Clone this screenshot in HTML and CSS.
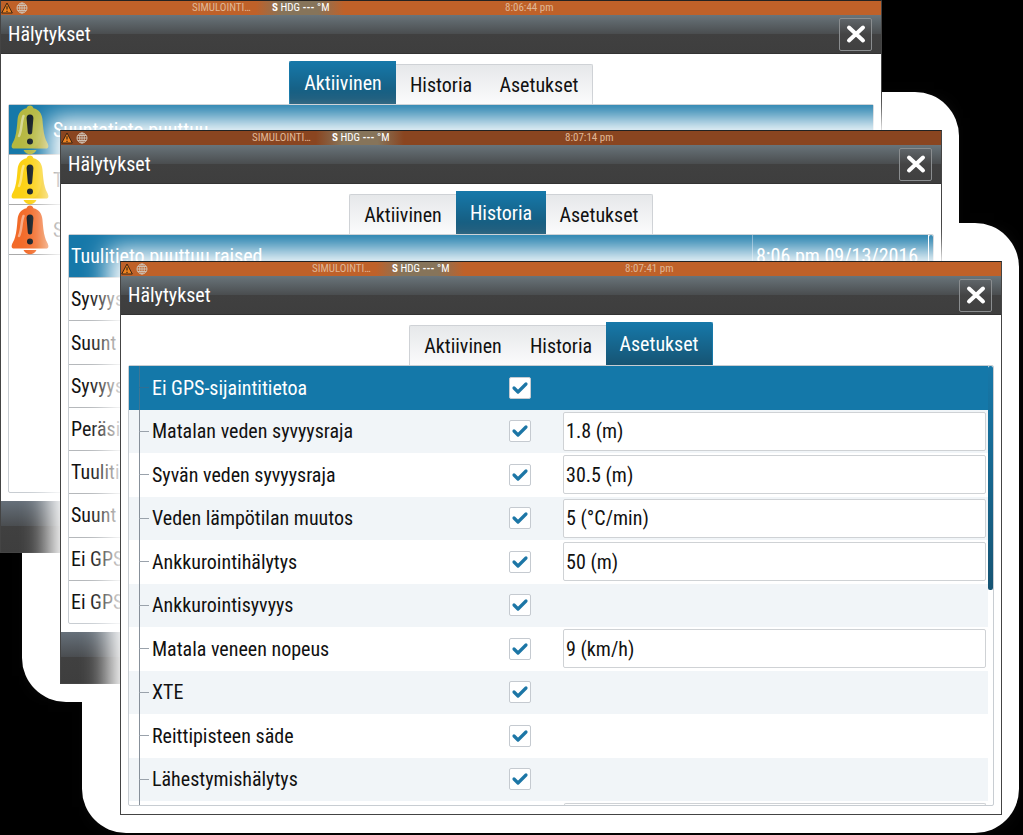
FILE: index.html
```html
<!DOCTYPE html>
<html lang="fi">
<head>
<meta charset="utf-8">
<meta name="viewport" content="width=device-width, initial-scale=1">
<title>Hälytykset</title>
<link rel="stylesheet" href="styles.css">
</head>
<body>
<svg class="symbols" aria-hidden="true">
  <defs>
    <symbol id="warn" viewBox="0 0 12 12">
      <path d="M6 1 11.3 11H.7z" fill="#ef8420" stroke="#3a2413" stroke-width="1" stroke-linejoin="round"/>
      <path d="M6 4.2v3.4M6 8.8v1.2" stroke="#3a2413" stroke-width="1.2"/>
    </symbol>
    <symbol id="globe" viewBox="0 0 12 12">
      <g fill="none" stroke="#cfc0b2" stroke-width="1"><circle cx="6" cy="6" r="5"/><ellipse cx="6" cy="6" rx="2.3" ry="5"/><path d="M6 1v10M1 6h10M1.8 3.5h8.4M1.8 8.5h8.4"/></g>
    </symbol>
    <symbol id="cross" viewBox="0 0 20 20">
      <path d="M3 3.500 17 16.500M17 3.500 3 16.500" fill="none" stroke="#fff" stroke-width="4" stroke-linecap="round"/>
    </symbol>
    <symbol id="bell" viewBox="0 0 38 50">
      <path d="M12.500 45h13c-1.500 3-4 4.300-6.500 4.300S14 48 12.500 45z" fill="currentColor"/>
      <path d="M19 .5c-1.800 0-3 1.200-3.500 2.800C10 4.500 7.200 8.500 6.600 14c-.6 7.500-1.100 13-2.500 18C3.200 36 .8 38 .6 41c0 2 .9 2.500 2.600 2.500h31.600c1.700 0 2.600-.5 2.600-2.500-.2-3-2.600-5-3.500-9-1.400-5-1.900-10.500-2.500-18-.6-5.500-3.400-9.500-8.900-10.700C22 1.700 20.800.5 19 .5z" fill="currentColor"/>
      <path d="M31.400 14c.6 7.500 1.100 13 2.500 18 .9 4 3.300 6 3.500 9 0 2-.9 2.500-2.600 2.500H20c9-1 11.500-14 11.400-29.500z" fill="#c87800" fill-opacity="0.12"/>
      <path d="M12.500 11c-2.500 6-1.500 14-4.500 20" fill="none" stroke="#fff" stroke-opacity="0.45" stroke-width="2.500" stroke-linecap="round"/>
      <path d="M19 9.500c2.200 0 3.500 1.500 3.400 3.800l-1.200 14c-.1 1.500-1 2.200-2.200 2.200s-2.100-.7-2.200-2.200l-1.200-14c-.1-2.300 1.200-3.800 3.400-3.800z" fill="#101a22"/>
      <circle cx="19" cy="36.500" r="3" fill="#101a22"/>
    </symbol>
  </defs>
</svg>

<main class="desktop">

  <section class="window window-active" aria-label="Hälytykset: Aktiivinen">
    <div class="status">
      <span class="status-icons"><svg><use href="#warn"/></svg><svg><use href="#globe"/></svg></span>
      <span class="status-mode">SIMULOINTI…</span>
      <span class="status-heading"><b>S</b> HDG <b>---</b> °M</span>
      <span class="status-time">8:06:44 pm</span>
    </div>
    <header class="titlebar"><h2>Hälytykset</h2><button class="close" aria-label="Sulje"><svg><use href="#cross"/></svg></button></header>
    <nav class="tabs">
      <button class="tab tab-current">Aktiivinen</button><button class="tab">Historia</button><button class="tab">Asetukset</button>
    </nav>
    <div class="panel">
      <ul class="alarms">
        <li class="alarm alarm-selected"><svg class="bell bell-green"><use href="#bell"/></svg><span>Suuntatieto puuttuu</span></li>
        <li class="alarm"><svg class="bell bell-yellow"><use href="#bell"/></svg><span>T</span></li>
        <li class="alarm"><svg class="bell bell-orange"><use href="#bell"/></svg><span>S</span></li>
      </ul>
    </div>
    <footer class="toolbar"></footer>
  </section>

  <section class="window window-history" aria-label="Hälytykset: Historia">
    <div class="status status-dark">
      <span class="status-icons"><svg><use href="#warn"/></svg><svg><use href="#globe"/></svg></span>
      <span class="status-mode">SIMULOINTI…</span>
      <span class="status-heading"><b>S</b> HDG <b>---</b> °M</span>
      <span class="status-time">8:07:14 pm</span>
    </div>
    <header class="titlebar"><h2>Hälytykset</h2><button class="close" aria-label="Sulje"><svg><use href="#cross"/></svg></button></header>
    <nav class="tabs">
      <button class="tab">Aktiivinen</button><button class="tab tab-current">Historia</button><button class="tab">Asetukset</button>
    </nav>
    <div class="panel">
      <ul class="events">
        <li class="event event-selected"><span>Tuulitieto puuttuu raised</span><time>8:06 pm 09/13/2016</time></li>
        <li class="event">Syvyys</li>
        <li class="event">Suunt</li>
        <li class="event">Syvyys</li>
        <li class="event">Peräsi</li>
        <li class="event">Tuuliti</li>
        <li class="event">Suunt</li>
        <li class="event">Ei GPS</li>
        <li class="event">Ei GPS</li>
      </ul>
      <div class="scroll"><div class="thumb"></div></div>
    </div>
    <footer class="toolbar"></footer>
  </section>

  <section class="window window-settings" aria-label="Hälytykset: Asetukset">
    <div class="status">
      <span class="status-icons"><svg><use href="#warn"/></svg><svg><use href="#globe"/></svg></span>
      <span class="status-mode">SIMULOINTI…</span>
      <span class="status-heading"><b>S</b> HDG <b>---</b> °M</span>
      <span class="status-time">8:07:41 pm</span>
    </div>
    <header class="titlebar"><h2>Hälytykset</h2><button class="close" aria-label="Sulje"><svg><use href="#cross"/></svg></button></header>
    <nav class="tabs">
      <button class="tab">Aktiivinen</button><button class="tab">Historia</button><button class="tab tab-current">Asetukset</button>
    </nav>
    <div class="panel">
      <div class="settings">
        <div class="setting setting-selected"><label for="s1">Ei GPS-sijaintitietoa</label><input id="s1" type="checkbox" checked></div>
        <div class="setting"><label for="s2">Matalan veden syvyysraja</label><input id="s2" type="checkbox" checked><input type="text" value="1.8 (m)" aria-label="Matalan veden syvyysraja"></div>
        <div class="setting"><label for="s3">Syvän veden syvyysraja</label><input id="s3" type="checkbox" checked><input type="text" value="30.5 (m)" aria-label="Syvän veden syvyysraja"></div>
        <div class="setting"><label for="s4">Veden lämpötilan muutos</label><input id="s4" type="checkbox" checked><input type="text" value="5 (°C/min)" aria-label="Veden lämpötilan muutos"></div>
        <div class="setting"><label for="s5">Ankkurointihälytys</label><input id="s5" type="checkbox" checked><input type="text" value="50 (m)" aria-label="Ankkurointihälytys"></div>
        <div class="setting"><label for="s6">Ankkurointisyvyys</label><input id="s6" type="checkbox" checked></div>
        <div class="setting"><label for="s7">Matala veneen nopeus</label><input id="s7" type="checkbox" checked><input type="text" value="9 (km/h)" aria-label="Matala veneen nopeus"></div>
        <div class="setting"><label for="s8">XTE</label><input id="s8" type="checkbox" checked></div>
        <div class="setting"><label for="s9">Reittipisteen säde</label><input id="s9" type="checkbox" checked></div>
        <div class="setting"><label for="s10">Lähestymishälytys</label><input id="s10" type="checkbox" checked></div>
        <div class="setting-next"><span></span></div>
      </div>
      <div class="scroll"><div class="thumb"></div></div>
    </div>
  </section>

</main>
</body>
</html>
```
FILE: styles.css
```css
* { box-sizing: border-box; }

html, body { height: 100%; }

body {
  margin: 0;
  background: #000;
  color: #111;
  font: 20px/28px "Roboto Condensed", "Open Sans", sans-serif;
}

button, input { font: inherit; color: inherit; margin: 0; }
h2, ul { margin: 0; padding: 0; font: inherit; list-style: none; }
.symbols { position: absolute; width: 0; height: 0; }

.desktop {
  position: relative;
  isolation: isolate;
  height: 100%;
  min-height: 700px;
  overflow: hidden;
}

/* Cascaded windows */
.window {
  position: absolute;
  display: flex;
  flex-direction: column;
  background: #fff;
  border: 1px solid #444;
  border-top-color: #222;
}
.window-active { inset: 0 141px 282px 0; }
.window-history { inset: 130px 81px 151px 60px; }
.window-settings { inset: 261px 21px 20px 120px; }

.window-history, .window-settings { box-shadow: -10px -10px 24px 2px #fff; }
.window-history::before, .window-settings::before {
  content: "";
  position: absolute;
  z-index: -1;
  inset: -39px -18px -19px -39px;
  border-radius: 44px;
  background: #fff;
}

/* Status line */
.status {
  display: grid;
  grid-template-columns: 191px 64px 88px 1fr;
  align-items: center;
  height: 14px;
  flex: none;
  background: #bf6129;
  color: #e0b796;
  font-size: 11px;
  line-height: 14px;
  white-space: nowrap;
}
.status-dark { background: #8a4520; }
.status-icons { display: flex; gap: 3px; }
.status-icons svg { width: 12px; height: 12px; }
.status-heading {
  padding-left: 16px;
  background: linear-gradient(90deg, transparent, #86745a 30%, #86745a 70%, transparent);
  color: #fff;
}
.status-time { padding-left: 161px; }

/* Title bar */
.titlebar {
  display: flex;
  align-items: center;
  justify-content: space-between;
  height: 39px;
  flex: none;
  padding: 0 9px 0 7px;
  border-bottom: 1px solid #333;
  background: linear-gradient(#69747a, #4a4d4f 50%, #404040 51%, #3e3e3e);
  color: #fff;
}
.close {
  display: grid;
  place-items: center;
  width: 33px;
  height: 33px;
  padding: 0;
  border: 1px solid #8a8d8f;
  border-radius: 2px;
  background: linear-gradient(#5f6569, #444 50%, #404040);
}
.close svg { width: 20px; height: 20px; }

/* Tabs */
.tabs {
  display: flex;
  justify-content: center;
  align-items: flex-end;
  height: 50px;
  flex: none;
}
.tab {
  width: 107px;
  height: 40px;
  padding: 0;
  border: 0 solid #cfd2d6;
  border-top-width: 1px;
  background: linear-gradient(#e6e8ea, #fbfbfc);
  color: #111;
}
.tab:nth-child(2) { width: 90px; }
.tab:first-child { border-left-width: 1px; border-top-left-radius: 2px; }
.tab:last-child { border-right-width: 1px; border-top-right-radius: 2px; }
.tab-current {
  height: 43px;
  border-color: #1778a8;
  background: linear-gradient(#1678a9, #165473);
  color: #fff;
}

/* Content panel */
.panel {
  display: flex;
  flex: 1;
  min-height: 0;
  margin: 0 7px 8px;
  border: 1px solid #c8cdd2;
  border-radius: 2px;
}
.toolbar {
  height: 51px;
  flex: none;
  background: linear-gradient(#66707a, #4a4d50 49%, #404040 50%, #3e3e3e);
}
.scroll { width: 5px; flex: none; }
.thumb {
  height: 51%;
  border-radius: 2px;
  background: linear-gradient(#1678a9, #165473);
}

/* Active alarms */
.alarms { flex: 1; }
.alarm {
  display: flex;
  align-items: center;
  gap: 4px;
  height: 50px;
  padding-left: 2px;
  border-bottom: 1px solid #aaa;
}
.alarm-selected { background: #1678a9; color: #fff; }
.bell { width: 38px; height: 50px; flex: none; }
.bell-green { color: #b5b840; }
.bell-yellow { color: #fbd112; }
.bell-orange { color: #f26a28; }

/* Alarm history */
.events {
  display: flex;
  flex-direction: column;
  flex: 1;
  min-width: 0;
}
.event {
  display: flex;
  flex: 1;
  min-height: 0;
  align-items: center;
  padding-left: 2px;
  border-bottom: 1px solid #b5b8bb;
  white-space: nowrap;
}
.event:last-child { border-bottom: 0; }
.event span { flex: 1; }
.event-selected { background: #1678a9; color: #fff; }
.event time {
  width: 176px;
  padding-left: 3px;
  border-left: 1px solid #6fa8ca;
  line-height: 42px;
}
.window-history .scroll { border-left: 1px solid #fff; }

/* Alarm settings */
.settings {
  display: flex;
  flex-direction: column;
  flex: 1;
  min-width: 0;
  background: linear-gradient(#87909a, #87909a) 10px 0 / 1px 100% no-repeat;
}
.setting {
  display: grid;
  grid-template-columns: minmax(0, 358fr) 54px minmax(0, 424fr) 2px;
  align-items: center;
  flex: 1;
  min-height: 0;
  padding-left: 23px;
  background:
    linear-gradient(#9aa2ab, #9aa2ab) 10px 50% / 10px 1px no-repeat,
    linear-gradient(#87909a, #87909a) 10px 0 / 1px 100% no-repeat,
    #fff;
}
.setting:nth-child(even) { background-color: #f1f5f8; }
.setting-selected {
  background:
    linear-gradient(#2f6f94, #2f6f94) 10px 50% / 10px 1px no-repeat,
    linear-gradient(#3f7593, #3f7593) 10px 0 / 1px 100% no-repeat,
    #1478a9;
  color: #fff;
}
.setting input[type="text"] {
  width: 100%;
  height: 39px;
  padding: 0 2px;
  border: 1px solid #cfd2d5;
  border-radius: 2px;
  background: #fff;
}
.setting input[type="checkbox"] {
  appearance: none;
  width: 22px;
  height: 22px;
  border: 1px solid #c5cad0;
  border-radius: 2px;
  background: #fff url("data:image/svg+xml,%3Csvg xmlns='http://www.w3.org/2000/svg' viewBox='0 0 20 20'%3E%3Cpath d='M4 10l4 4 8-8' fill='none' stroke='%231c76a6' stroke-width='3.200' stroke-linecap='round' stroke-linejoin='round'/%3E%3C/svg%3E") center / 20px no-repeat;
}
.setting-next { height: 4px; flex: none; padding: 2px 2px 0 435px; }
.setting-next span {
  display: block;
  height: 2px;
  border: 1px solid #cfd2d5;
  border-bottom: 0;
  border-radius: 2px 2px 0 0;
}
```
